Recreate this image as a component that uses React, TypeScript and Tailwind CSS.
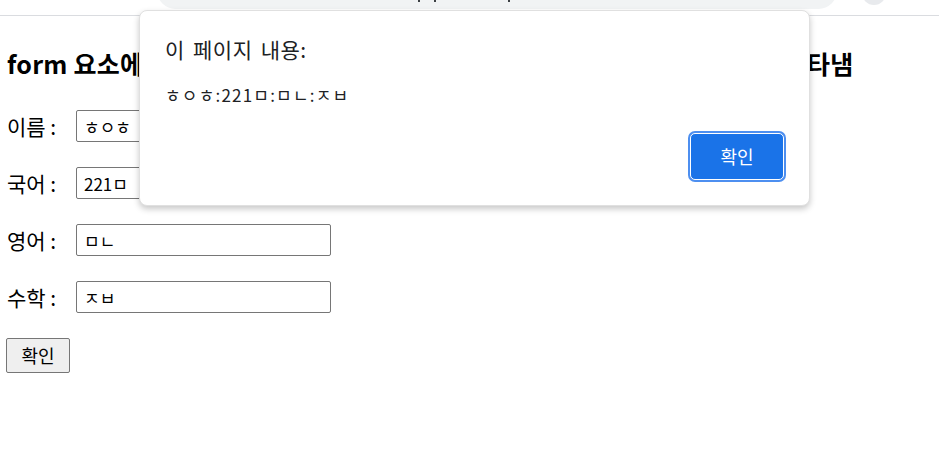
import { useState } from 'react';

const FONT = "font-['Malgun_Gothic','Noto_Sans_CJK_KR',sans-serif]";

type Field = { label: string; value: string };

const fields: Field[] = [
  { label: '이름', value: 'ㅎㅇㅎ' },
  { label: '국어', value: '221ㅁ' },
  { label: '영어', value: 'ㅁㄴ' },
  { label: '수학', value: 'ㅈㅂ' },
];

// Bottom edge of the browser toolbar (address bar + profile circle)
function BrowserStrip() {
  return (
    <div className="flex items-start h-[16px] pl-[157px] border-b border-[#dadce0] overflow-hidden">
      <div className="flex items-end gap-[14px] w-[680px] h-[37px] -mt-[28px] pl-[261px] pb-[7px] rounded-full bg-[#f1f3f4]">
        <span className="w-[2px] h-[2px] bg-[#3c4043]" />
        <span className="w-[2px] h-[2px] bg-[#3c4043]" />
        <span className="ml-[58px] w-[2px] h-[2px] bg-[#3c4043]" />
      </div>
      <div className="ml-[25px] -mt-[19px] w-[24px] h-[24px] rounded-full bg-[#e8eaed]" />
    </div>
  );
}

function AlertDialog({ message, onClose }: { message: string; onClose: () => void }) {
  return (
    <div className="absolute left-[139px] top-[10px] w-[671px] h-[196px] flex flex-col bg-white rounded-[8px] border border-[#e0e0e0] shadow-[0_3px_6px_rgba(0,0,0,0.22)]">
      <div className="pl-[25px] pt-[24px] text-[21px] leading-[28px] tracking-[0.5px] [word-spacing:3px] text-[#202124]">
        이 페이지 내용:
      </div>
      <div className="pl-[25px] pt-[21px] text-[17px] leading-[22px] tracking-[1.2px] text-[#202124]">{message}</div>
      <div className="flex justify-end pr-[23px] pt-[25px]">
        <button onClick={onClose} className="w-[98px] h-[51px] rounded-[7px] bg-[#4d8ff0] p-[2px]">
          <span className="flex items-center justify-center w-full h-full rounded-[5px] border border-white bg-[#1a73e8] text-white text-[18px]">
            확인
          </span>
        </button>
      </div>
    </div>
  );
}

export default function App() {
  const [open, setOpen] = useState(true);
  const message = fields.map((f) => f.value).join(':');

  return (
    <div className={`relative w-[939px] h-[458px] bg-white text-black overflow-hidden ${FONT}`}>
      <BrowserStrip />

      <div className="flex flex-col items-start px-[7px] pt-[29px]">
        <h2 className="text-[25px] leading-[36px] font-bold tracking-[0.25px] whitespace-nowrap">
          form 요소에 입력된 각각 값을 모두 가져와서 경고창 하나로 한꺼번에 모아 나타냄
        </h2>

        <div className="mt-[29px] flex flex-col gap-[25px]">
          {fields.map((f) => (
            <div key={f.label} className="flex items-center h-[32px]">
              <span className="w-[69px] text-[21px] leading-[32px]">{f.label} :</span>
              <input
                readOnly
                value={f.value}
                className="w-[255px] h-[32px] px-[7px] border border-[#767676] rounded-[2px] text-[17px] outline-none"
              />
            </div>
          ))}
        </div>

        <button className="mt-[25px] -ml-[1px] w-[64px] h-[35px] bg-[#efefef] border border-[#767676] rounded-[2px] text-[18px]">
          확인
        </button>
      </div>

      {open && <AlertDialog message={message} onClose={() => setOpen(false)} />}
    </div>
  );
}
